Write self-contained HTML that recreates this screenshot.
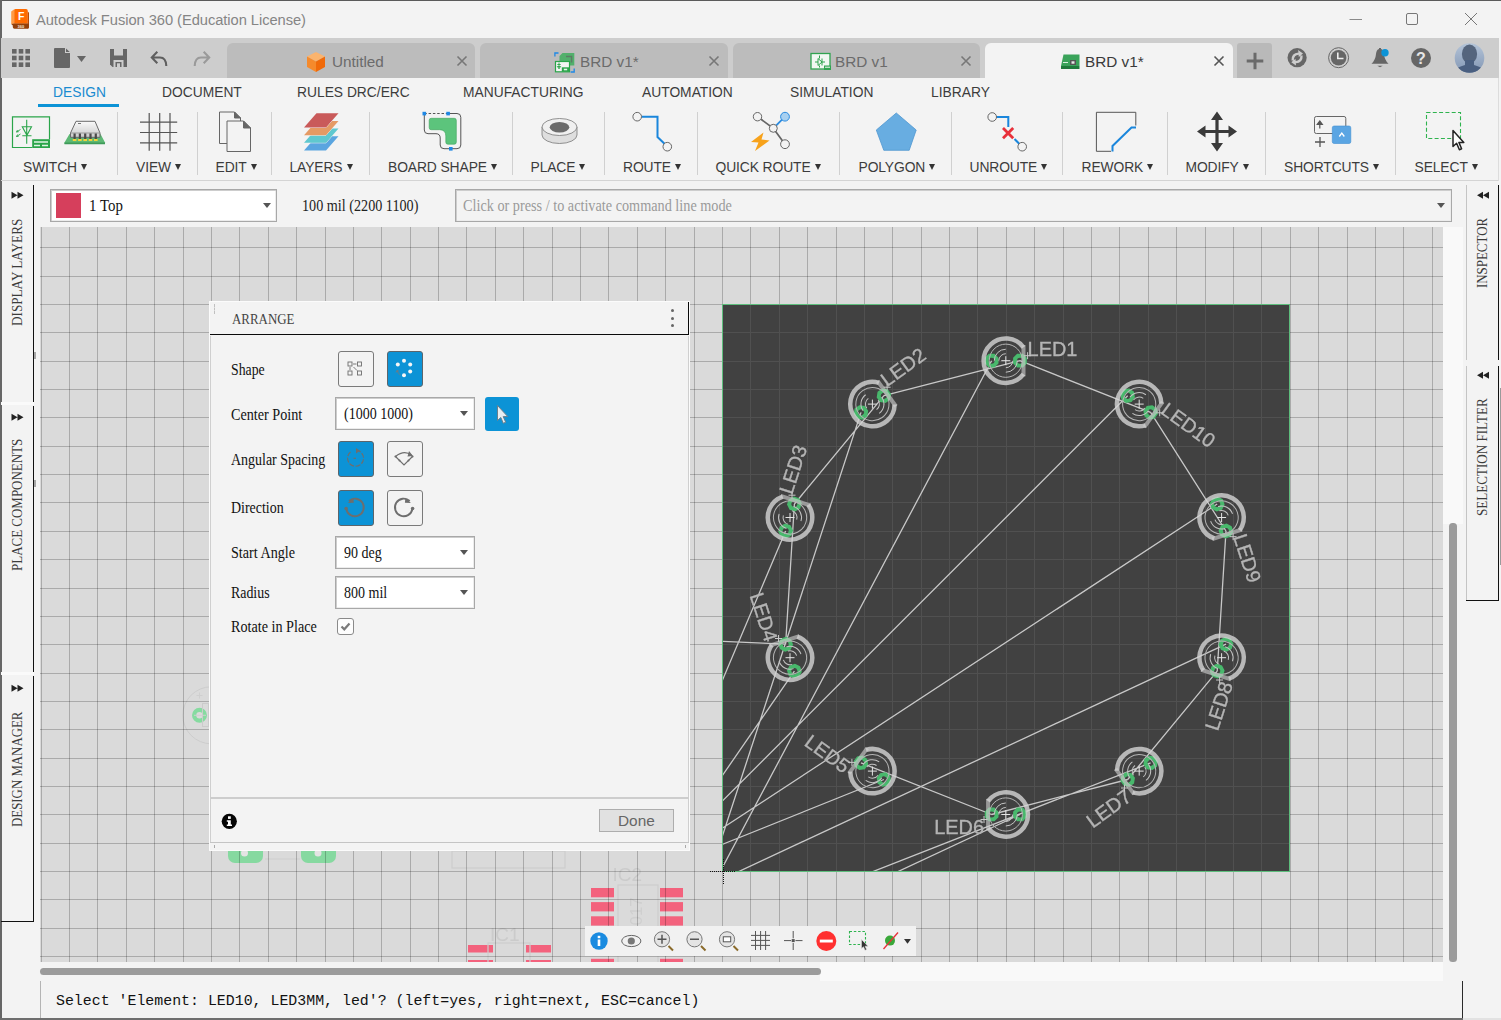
<!DOCTYPE html>
<html><head><meta charset="utf-8"><title>Autodesk Fusion 360 (Education License)</title>
<style>
*{box-sizing:border-box;margin:0;padding:0}
html,body{width:1501px;height:1020px;overflow:hidden;background:#f3f3f3;font-family:"Liberation Sans",sans-serif;}
.a{position:absolute}
.t{position:absolute;white-space:nowrap;line-height:1}
.serif{font-family:"Liberation Serif","Noto Serif CJK SC",serif}
#win{position:absolute;left:0;top:0;width:1501px;height:1020px;background:#f3f3f3;overflow:hidden}
.sep{position:absolute;width:1px;background:#d0d0d0;top:112px;height:63px}
.lbl{position:absolute;white-space:nowrap;line-height:1;font-size:13.85px;color:#3c3c3c;top:161px;letter-spacing:-0.1px}
.lbl i{display:inline-block;width:0;height:0;border-left:3.5px solid transparent;border-right:3.5px solid transparent;border-top:6px solid #333;margin-left:4px;vertical-align:1.8px}
.rt{position:absolute;white-space:nowrap;line-height:1;font-size:13.82px;color:#3c3c3c;top:86px}
.tab{position:absolute;top:43px;height:35px;border-radius:6px 6px 0 0;background:#bcbcbc}
.tabt{position:absolute;white-space:nowrap;line-height:1;font-size:15.3px;color:#6b6b6b;top:54px}
.vt{position:absolute;white-space:nowrap;line-height:1;font-size:12.5px;color:#3c3c3c;transform-origin:0 0;transform:rotate(-90deg)}
.dl{position:absolute;white-space:nowrap;line-height:1;font-size:14px;color:#1a1a1a;left:231px}
.btn{position:absolute;width:36px;height:36px;border-radius:3px;border:1px solid #7a7a7a;background:#f3f3f3}
.btn.on{background:#0c93d6;border-color:#5c656b}
.cmb{position:absolute;background:#fff;border:1px solid #a8a8a8;box-shadow:inset 1px 1px 0 #cdcdcd, inset -1px -1px 0 #ececec}
</style></head><body><div id="win">
<div class="a" style="left:0;top:0;width:1501px;height:1px;background:#5a5a5a"></div>
<div class="a" style="left:0;top:0;width:1.500px;height:1020px;background:#666"></div>
<svg class="a" style="left:10px;top:8px" width="20" height="22" viewBox="10 8 20 22">
<path d="M11.200 11.500 L14.300 9.300 V23.800 L11.200 24Z" fill="#ff9a45"/>
<path d="M15.500 9.100 H26 Q27.800 9.100 27.800 11 V23.800 H14.200 V10.400 Q14.200 9.100 15.500 9.100Z" fill="#ff6b00"/>
<path d="M27.800 11.500 L29 12.800 V27 Q29 28.700 27.400 28.700 L27.800 23.800Z" fill="#b84a06"/>
<path d="M11.200 24 L14.200 23.600 H27.900 L29 24 V27 Q29 28.700 27.400 28.700 H14.500 Q12.800 28.700 12.800 27 V25.500Z" fill="#94400a"/>
<text x="21.200" y="20.300" font-family="Liberation Sans,sans-serif" font-weight="bold" font-size="10.500" fill="#fff" text-anchor="middle">F</text>
<text x="20.800" y="27.600" font-family="Liberation Sans,sans-serif" font-weight="bold" font-size="4" fill="#f6e6da" text-anchor="middle">360</text>
</svg>
<div class="t" style="left:36px;top:12.8px;font-size:14.7px;letter-spacing:-0.05px;color:#858585">Autodesk Fusion 360 (Education License)</div>
<svg class="a" style="left:1340px;top:8px" width="150" height="24" viewBox="0 0 150 24">
<path d="M9.5 11.5 H22" stroke="#8a8a8a" stroke-width="1" fill="none"/>
<rect x="66.5" y="5.5" width="11" height="11" rx="1.5" stroke="#777" stroke-width="1" fill="none"/>
<path d="M125 5 L137 17 M137 5 L125 17" stroke="#777" stroke-width="1" fill="none"/>
</svg>
<div class="a" style="left:1px;top:38px;width:1498px;height:40px;background:#cdcdcd"></div>
<svg class="a" style="left:0;top:38px" width="228" height="40" viewBox="0 38 228 40">
<g fill="#666">
<rect x="12" y="49" width="4.6" height="4.6"/><rect x="18.7" y="49" width="4.6" height="4.6"/><rect x="25.4" y="49" width="4.6" height="4.6"/>
<rect x="12" y="55.7" width="4.6" height="4.6"/><rect x="18.7" y="55.7" width="4.6" height="4.6"/><rect x="25.4" y="55.7" width="4.6" height="4.6"/>
<rect x="12" y="62.4" width="4.6" height="4.6"/><rect x="18.7" y="62.4" width="4.6" height="4.6"/><rect x="25.4" y="62.4" width="4.6" height="4.6"/>
<path d="M55 48 H65 V53 H70 V67 Q70 68 69 68 H55 Q54 68 54 67 V49 Q54 48 55 48Z M66 48.5 L69.8 52 H66Z"/>
<path d="M77 56 H86 L81.5 62Z"/>
<path d="M110 49 H127 V67 H112.5 L110 64.5Z"/>
<path d="M157.300 51.800 L151.800 57.500 L157.300 63.200 M152.500 57.500 H160 Q166 57.500 166.300 66" fill="none" stroke="#5f5f5f" stroke-width="2.100"/>
<path d="M203.700 51.800 L209.200 57.500 L203.700 63.200 M208.500 57.500 H201 Q195 57.500 194.700 66" fill="none" stroke="#9a9a9a" stroke-width="2.100"/>
</g>
<g fill="#cdcdcd"><rect x="114" y="49" width="9" height="6.5"/><rect x="113.5" y="60" width="10" height="7"/></g>
<rect x="115.5" y="62" width="6" height="5" fill="#666"/><rect x="117" y="63.3" width="3" height="3.7" fill="#cdcdcd"/>
</svg>
<div class="tab" style="left:227px;width:248px;background:#bcbcbc"></div>
<div class="tab" style="left:480px;width:247.5px;background:#bcbcbc"></div>
<div class="tab" style="left:733px;width:246.5px;background:#bcbcbc"></div>
<div class="tab" style="left:985px;width:247.5px;background:#f3f3f3"></div>
<svg class="a" style="left:306px;top:51px" width="20" height="22" viewBox="0 0 20 22">
<path d="M10 1 L19 5.5 L10 10.5 L1 5.500Z" fill="#fbb46e"/><path d="M1 5.500 L10 10.500 V21 L1 16Z" fill="#f58a2c"/><path d="M19 5.500 L10 10.500 V21 L19 16Z" fill="#f06a0a"/></svg>
<div class="tabt" style="left:332px">Untitled</div>
<div class="tabt" style="left:580px">BRD v1*</div>
<div class="tabt" style="left:835px">BRD v1</div>
<div class="tabt" style="left:1085px;color:#3a3a3a">BRD v1*</div>
<svg class="a" style="left:455.5px;top:55px" width="12" height="12" viewBox="0 0 12 12"><path d="M1.500 1.500 L10.500 10.500 M10.500 1.500 L1.500 10.500" stroke="#777" stroke-width="1.600" fill="none"/></svg>
<svg class="a" style="left:708px;top:55px" width="12" height="12" viewBox="0 0 12 12"><path d="M1.500 1.500 L10.500 10.500 M10.500 1.500 L1.500 10.500" stroke="#777" stroke-width="1.600" fill="none"/></svg>
<svg class="a" style="left:960px;top:55px" width="12" height="12" viewBox="0 0 12 12"><path d="M1.500 1.500 L10.500 10.500 M10.500 1.500 L1.500 10.500" stroke="#777" stroke-width="1.600" fill="none"/></svg>
<svg class="a" style="left:1212.5px;top:55px" width="12" height="12" viewBox="0 0 12 12"><path d="M1.500 1.500 L10.500 10.500 M10.500 1.500 L1.500 10.500" stroke="#555" stroke-width="1.600" fill="none"/></svg>
<svg class="a" style="left:553px;top:51px" width="24" height="22" viewBox="553 51 24 22">
<path d="M562.500 53 H574.300 V65.600 H559.500 V56Z" fill="#52b06c"/>
<path d="M566 55.800 H572.300 V62.500 H570.800 V57.300 H566Z" fill="#5d7a66"/>
<rect x="555.500" y="61.500" width="14" height="10.300" fill="#f4f4f4" stroke="#2aa54a" stroke-width="1.200"/>
<path d="M559 62.500 v6.500 M557.300 64.500 h3.400 M557.300 66.500 h3.400 l-1.700 2z" stroke="#2aa54a" stroke-width="0.900" fill="none"/>
<rect x="561.800" y="67.300" width="7.400" height="4.400" fill="#2aa54a"/><rect x="563.800" y="68.700" width="3.400" height="1.600" fill="#e8f5ec"/>
<path d="M554.900 56.500 V53 H558.500" stroke="#1e88e5" stroke-width="1.300" fill="none"/>
<path d="M574.200 68.500 V72 H570.600" stroke="#1e88e5" stroke-width="1.300" fill="none"/>
</svg>
<svg class="a" style="left:810px;top:52px" width="22" height="20" viewBox="0 0 22 20">
<rect x="1" y="1.500" width="19" height="15.500" fill="#f1f8f2" stroke="#2fa34f" stroke-width="1.300"/>
<path d="M5 10 h3 M8 6.500 v7 l4 -3.500z M12 6.500 v7 M12 10 h3 M9.500 3.500 v3 M9.500 13.500 v2" stroke="#2fa34f" stroke-width="1" fill="none"/>
<rect x="14" y="13.500" width="7" height="4.500" fill="#2fa34f"/><rect x="15" y="14.700" width="5" height="1" fill="#f1f8f2"/>
</svg>
<svg class="a" style="left:1059px;top:53px" width="22" height="18" viewBox="0 0 22 18">
<path d="M4.500 1.500 H20.500 V13 H2 Z" fill="#3aa35a"/><path d="M2 13 H20.500 V16 H2Z" fill="#1f7a3c"/>
<rect x="11" y="7" width="6" height="5" fill="#555"/><rect x="12.500" y="8.300" width="3" height="2.400" fill="#e8e8e8"/>
<path d="M4 9.500 h5" stroke="#d9f0df" stroke-width="1"/>
</svg>
<div class="a" style="left:1237px;top:43px;width:35px;height:35px;background:#b9b9b9;border-radius:3px 3px 0 0"></div>
<svg class="a" style="left:1245px;top:51px" width="20" height="20" viewBox="0 0 20 20"><path d="M10 1.700 V18.300 M1.700 10 H18.300" stroke="#6a6a6a" stroke-width="3"/></svg>
<svg class="a" style="left:1280px;top:40px" width="215" height="38" viewBox="1280 40 215 38">
<circle cx="1297.100" cy="57.700" r="9.600" fill="#666"/>
<path d="M1291.500 60.500 Q1291 53 1298.500 52.500 L1298 50 L1303 53.500 L1298.800 57 L1298.600 54.800 Q1294 55 1293.800 60.500Z M1302.700 55.500 Q1303 63 1295.800 63.300 L1296 65.600 L1291.300 62.200 L1295.500 58.800 L1295.700 61 Q1300.300 60.800 1300.400 55.500Z" fill="#cdcdcd"/>
<circle cx="1338.600" cy="57.700" r="10" fill="none" stroke="#666" stroke-width="1"/>
<circle cx="1338.600" cy="57.700" r="7.800" fill="#666"/>
<path d="M1337.800 52.500 V58.500 H1343.500" stroke="#ededed" stroke-width="1.600" fill="none"/>
<path d="M1371.500 63.800 Q1375.500 60 1376 54 Q1376.500 49.500 1379 49 V48 H1381 V49 Q1383.500 49.500 1384 54 Q1384.500 60 1388.500 63.800Z" fill="#666"/>
<path d="M1377.300 65.800 H1382.700 L1380 67.300Z" fill="#666"/>
<circle cx="1385" cy="52.800" r="3.700" fill="#0c93d6"/>
<circle cx="1421" cy="58" r="10" fill="#666"/>
<text x="1421" y="64" font-family="Liberation Sans,sans-serif" font-weight="bold" font-size="16" fill="#e6e6e6" text-anchor="middle">?</text>
<defs><linearGradient id="avg" x1="0" y1="0" x2="0" y2="1"><stop offset="0" stop-color="#b4c4d8"/><stop offset="1" stop-color="#8397b4"/></linearGradient><clipPath id="avc"><circle cx="1469.500" cy="58" r="14.800"/></clipPath></defs>
<circle cx="1469.500" cy="58" r="14.800" fill="url(#avg)"/>
<g clip-path="url(#avc)"><ellipse cx="1469.500" cy="54" rx="7.600" ry="9.500" fill="#55657d"/><path d="M1465 60 h9 v5 q8 2 11 6 v6 h-31 v-6 q3 -4 11 -6z" fill="#4a5f80"/></g>
</svg>
<div class="rt" style="left:53px;color:#1a8bd0">DESIGN</div>
<div class="rt" style="left:162px">DOCUMENT</div>
<div class="rt" style="left:297px">RULES DRC/ERC</div>
<div class="rt" style="left:463px">MANUFACTURING</div>
<div class="rt" style="left:642px">AUTOMATION</div>
<div class="rt" style="left:790px">SIMULATION</div>
<div class="rt" style="left:931px">LIBRARY</div>
<div class="a" style="left:38px;top:104px;width:81px;height:3px;background:#0c93d6"></div>
<div class="sep" style="left:117px"></div>
<div class="sep" style="left:197px"></div>
<div class="sep" style="left:271px"></div>
<div class="sep" style="left:369px"></div>
<div class="sep" style="left:512px"></div>
<div class="sep" style="left:604px"></div>
<div class="sep" style="left:697px"></div>
<div class="sep" style="left:839px"></div>
<div class="sep" style="left:951px"></div>
<div class="sep" style="left:1062px"></div>
<div class="sep" style="left:1167px"></div>
<div class="sep" style="left:1265px"></div>
<div class="sep" style="left:1395px"></div>
<div class="lbl" style="left:23px">SWITCH<i></i></div>
<div class="lbl" style="left:136px">VIEW<i></i></div>
<div class="lbl" style="left:215.5px">EDIT<i></i></div>
<div class="lbl" style="left:289.5px">LAYERS<i></i></div>
<div class="lbl" style="left:388px">BOARD SHAPE<i></i></div>
<div class="lbl" style="left:530.5px">PLACE<i></i></div>
<div class="lbl" style="left:623px">ROUTE<i></i></div>
<div class="lbl" style="left:715.5px">QUICK ROUTE<i></i></div>
<div class="lbl" style="left:858.5px">POLYGON<i></i></div>
<div class="lbl" style="left:969.5px">UNROUTE<i></i></div>
<div class="lbl" style="left:1081.5px">REWORK<i></i></div>
<div class="lbl" style="left:1185.5px">MODIFY<i></i></div>
<div class="lbl" style="left:1284px">SHORTCUTS<i></i></div>
<div class="lbl" style="left:1414.5px">SELECT<i></i></div>
<div class="a" style="left:1px;top:180px;width:1498px;height:1px;background:#d4d4d4"></div><div class="a" style="left:1498px;top:78px;width:1px;height:103px;background:#dcdcdc"></div>
<svg class="a" style="left:0;top:108px" width="1501" height="50" viewBox="0 108 1501 50">
<g stroke="#2aa54a" fill="none" stroke-width="1.200">
<path d="M32 147.500 H12.500 V116.800 H49.500 V139"/>
<path d="M26.700 119.700 V143.700 M22.300 126.700 H31.500 L26.900 135.300Z M22.300 135.800 H31.500" stroke-width="1.100"/>
<path d="M20.500 129.500 L16.500 132 M20.500 134 L16.500 136.500 M16.500 132 l2.200 -0.300 M16.500 132 l1 -2 M16.500 136.500 l2.200 -0.300 M16.500 136.500 l1 -2" stroke-width="0.900"/>
</g>
<rect x="32.200" y="139.200" width="17.800" height="8.800" fill="#2aa54a"/>
<path d="M34 142 H48 M34 145.500 H40 M42 145.500 H48" stroke="#dff3e4" stroke-width="1.300"/>
<path d="M69.500 134 H100.500 L105 142.500 V144 H64.500 V142.500Z" fill="#5cb874"/>
<path d="M64.500 142.500 H105 V144.200 H64.500Z" fill="#3e9a58"/>
<defs><linearGradient id="chipg" x1="0" y1="0" x2="0" y2="1"><stop offset="0" stop-color="#fafafa"/><stop offset="1" stop-color="#c9c9c9"/></linearGradient></defs>
<path d="M76 121.300 H95 L100 133 V137.300 H70.500 V133Z" fill="url(#chipg)" stroke="#6a6a6a" stroke-width="1"/>
<path d="M70.500 133 H100" stroke="#8a8a8a" stroke-width="0.800"/>
<g fill="#4a4a4a"><rect x="73.500" y="133.500" width="2.200" height="5.500"/><rect x="78.800" y="133.500" width="2.200" height="5.500"/><rect x="84.100" y="133.500" width="2.200" height="5.500"/><rect x="89.400" y="133.500" width="2.200" height="5.500"/><rect x="94.700" y="133.500" width="2.200" height="5.500"/></g>
<g fill="#f0d23a"><rect x="72.800" y="139" width="3.600" height="2"/><rect x="78.100" y="139" width="3.600" height="2"/><rect x="83.400" y="139" width="3.600" height="2"/><rect x="88.700" y="139" width="3.600" height="2"/><rect x="94" y="139" width="3.600" height="2"/></g>
<path d="M78 123.500 h3" stroke="#555" stroke-width="0.800"/>
<path d="M149.200 113 V150.800 M159.700 113 V150.800 M170 113 V150.800 M140 122.200 H177.200 M140 132.500 H177.200 M140 142.800 H177.200" stroke="#555" stroke-width="1.200" fill="none"/>
<g stroke="#666" stroke-width="1" fill="#f3f3f3">
<path d="M219.500 112 H234.500 L240.500 118 V143.500 H219.500Z"/>
<path d="M234.500 112 V118 H240.500Z" fill="#666"/>
<path d="M227 121 H243.500 L250.500 128 V151.500 H227Z"/>
<path d="M243.500 121 V128 H250.500Z" fill="#666"/>
</g>
<path d="M316.500 136.3 H338.500 L326 150.5 H304Z" fill="#5aa5e0" stroke="#f3f3f3" stroke-width="1" paint-order="stroke"/>
<path d="M316.500 128.6 H338.500 L326 142.79999999999998 H304Z" fill="#5fc8cf" stroke="#f3f3f3" stroke-width="1" paint-order="stroke"/>
<path d="M316.500 121 H338.500 L326 135.2 H304Z" fill="#e59a64" stroke="#f3f3f3" stroke-width="1" paint-order="stroke"/>
<path d="M316.500 113.3 H338.500 L326 127.5 H304Z" fill="#c95a5a" stroke="#f3f3f3" stroke-width="1" paint-order="stroke"/>
<path d="M448 113.500 H457 Q460.800 113.500 460.800 117.300 V145 Q460.800 148.700 457 148.700 H444 Q440.200 148.700 440.200 145 V138 Q440.200 133.700 436 133.700 H428 Q424.300 133.700 424.300 130 V113.500" fill="none" stroke="#555" stroke-width="1"/>
<path d="M424.300 113.500 H448" stroke="#555" stroke-width="1" stroke-dasharray="2.500 1.800" fill="none"/>
<path d="M431.200 118.300 H454.300 Q456.300 118.300 456.300 120.300 V142.200 Q456.300 144.200 454.300 144.200 H447.800 Q445.800 144.200 445.800 142.200 V136 Q445.800 129.700 439.500 129.700 H431.200 Q429.200 129.700 429.200 127.700 V120.300 Q429.200 118.300 431.200 118.300Z" fill="#5cc47c" stroke="#3da35b" stroke-width="0.600"/>
<g fill="#1e88e5"><rect x="422.500" y="111.800" width="3.600" height="3.600"/><rect x="446.300" y="111.800" width="3.600" height="3.600"/><rect x="449" y="147" width="3.600" height="3.600"/></g>
<path d="M542 127 V135 A17.500 8.500 0 0 0 577 135 V127Z" fill="#dedede" stroke="#777" stroke-width="0.800"/>
<ellipse cx="559.500" cy="127" rx="17.500" ry="8.500" fill="#f0f0f0" stroke="#777" stroke-width="0.800"/>
<ellipse cx="559.500" cy="127.300" rx="9.800" ry="5.300" fill="#6b6b6b"/>
<path d="M641.500 116.700 H657.500 V137 L664.500 143.800" fill="none" stroke="#1a86dc" stroke-width="2"/>
<circle cx="637.200" cy="116.700" r="4.300" fill="#f3f3f3" stroke="#666" stroke-width="1"/><circle cx="667.300" cy="146.700" r="4.300" fill="#f3f3f3" stroke="#666" stroke-width="1"/>
<path d="M757.500 116.700 L773.300 128.300 L785 144.200" stroke="#666" stroke-width="1.800" fill="none"/>
<path d="M773.300 128.300 L785 116.700" stroke="#2a8be0" stroke-width="1.800" fill="none"/>
<circle cx="757.500" cy="116.700" r="4.200" fill="#f3f3f3" stroke="#666" stroke-width="1"/>
<circle cx="785" cy="116.700" r="4.400" fill="#a8d0f0" stroke="#2a8be0" stroke-width="1"/>
<circle cx="773.300" cy="128.300" r="4" fill="#f3f3f3" stroke="#666" stroke-width="1"/>
<circle cx="785" cy="144.200" r="4.400" fill="#f3f3f3" stroke="#666" stroke-width="1"/>
<path d="M763.500 132.500 L751 142 L758.500 142.500 L755 151 L769.500 140.500 L761.500 139.500Z" fill="#f7a21b"/>
<path d="M896.300 113 L916.200 130 L909.200 150.300 H883.800 L876.300 130Z" fill="#68ade1" stroke="#4f97d0" stroke-width="0.800"/>
<path d="M996.500 117 H1008.300 V127" fill="none" stroke="#1a86dc" stroke-width="2"/>
<path d="M1014.500 139 L1019.500 144" fill="none" stroke="#1a86dc" stroke-width="2"/>
<path d="M1003 128 L1013.200 138.200 M1013.200 128 L1003 138.200" stroke="#e8303a" stroke-width="2.800"/>
<circle cx="992.200" cy="117" r="4.300" fill="#f3f3f3" stroke="#666" stroke-width="1"/><circle cx="1022.200" cy="146.700" r="4.300" fill="#f3f3f3" stroke="#666" stroke-width="1"/>
<path d="M1135.800 125.500 V112.300 H1096.400 V151.300 H1111" fill="none" stroke="#555" stroke-width="1"/>
<path d="M1136 127.500 H1131.500 L1112.500 146 V151.500" fill="none" stroke="#1a86dc" stroke-width="2"/>
<g fill="#3a3a3a"><path d="M1217 111.500 L1223 120 H1218.600 V129.900 H1228.500 V125.500 L1237 131.500 L1228.500 137.500 V133.100 H1218.600 V143 H1223 L1217 151.500 L1211 143 H1215.400 V133.100 H1205.500 V137.500 L1197 131.500 L1205.500 125.500 V129.900 H1215.400 V120 H1211Z"/></g>
<rect x="1314.500" y="116.500" width="31.300" height="17" rx="1.800" fill="none" stroke="#666" stroke-width="1"/>
<path d="M1319.800 128.500 V123 M1317.300 124.300 L1319.800 121 L1322.300 124.300Z" stroke="#555" stroke-width="1.200" fill="#555"/>
<rect x="1332.300" y="126" width="18.500" height="17.500" rx="1.800" fill="#5aa5e3" stroke="#3f8fd2" stroke-width="0.600"/>
<path d="M1339.300 136.500 L1341.800 133 L1344.300 136.500" stroke="#fff" stroke-width="1.300" fill="none"/>
<path d="M1320 137 V147 M1315 142 H1325" stroke="#555" stroke-width="1.300"/>
<rect x="1426.500" y="112.500" width="34" height="26" fill="none" stroke="#2eb34e" stroke-width="1.100" stroke-dasharray="4 2.300"/>
<path d="M1453 130.500 V146.500 L1456.600 143.200 L1459.400 149.800 L1461.600 148.800 L1458.900 142.400 H1463.800Z" fill="#fdfdfd" stroke="#222" stroke-width="1.500" stroke-linejoin="round"/>
</svg>
<div class="cmb" style="left:50px;top:189px;width:227px;height:33px"></div>
<div class="a" style="left:56px;top:193px;width:25px;height:25px;background:#d63f5c"></div>
<div class="t serif" style="left:89px;top:198px;font-size:16px;color:#111;transform-origin:0 0;transform:scaleX(0.93)">1 Top</div>
<div class="a" style="left:262.600px;top:203.300px;width:0;height:0;border-left:4.200px solid transparent;border-right:4.200px solid transparent;border-top:5.600px solid #555"></div>
<div class="t serif" style="left:301.5px;top:198px;font-size:16px;color:#222;transform-origin:0 0;transform:scaleX(0.886)">100 mil (2200 1100)</div>
<div class="cmb" style="left:455px;top:189px;width:997px;height:33px;background:#f3f3f3"></div>
<div class="t serif" style="left:462.5px;top:198px;font-size:16px;color:#9a9a9a;transform-origin:0 0;transform:scaleX(0.89)">Click or press / to activate command line mode</div>
<div class="a" style="left:1436.800px;top:203.300px;width:0;height:0;border-left:4.200px solid transparent;border-right:4.200px solid transparent;border-top:5.600px solid #555"></div>
<div class="a" style="left:33px;top:185px;width:1.400px;height:217px;background:#111"></div>
<div class="a" style="left:33px;top:406px;width:1.400px;height:266px;background:#111"></div>
<div class="a" style="left:33px;top:676px;width:1.400px;height:246px;background:#111"></div>
<div class="a" style="left:1px;top:921px;width:33px;height:1.400px;background:#111"></div>
<div class="a" style="left:1px;top:402px;width:33px;height:3px;background:#fafafa"></div>
<div class="a" style="left:1px;top:672px;width:33px;height:3px;background:#fafafa"></div>
<div class="a" style="left:34.400px;top:352px;width:1.600px;height:7px;background:#a6a6a6"></div><div class="a" style="left:34.400px;top:480px;width:1.600px;height:7px;background:#a6a6a6"></div>
<svg class="a" style="left:11px;top:191px" width="14" height="9" viewBox="0 0 14 9"><path d="M0.500 0.800 L6.500 4.300 L0.500 7.800Z M6.500 0.800 L12.500 4.300 L6.500 7.800Z" fill="#222"/></svg>
<svg class="a" style="left:11px;top:413px" width="14" height="9" viewBox="0 0 14 9"><path d="M0.500 0.800 L6.500 4.300 L0.500 7.800Z M6.500 0.800 L12.500 4.300 L6.500 7.800Z" fill="#222"/></svg>
<svg class="a" style="left:11px;top:684px" width="14" height="9" viewBox="0 0 14 9"><path d="M0.500 0.800 L6.500 4.300 L0.500 7.800Z M6.500 0.800 L12.500 4.300 L6.500 7.800Z" fill="#222"/></svg>
<div class="vt serif" style="left:9px;top:326px;font-size:15.5px;transform:rotate(-90deg) scaleX(0.85)">DISPLAY LAYERS</div>
<div class="vt serif" style="left:9px;top:571px;font-size:15.5px;transform:rotate(-90deg) scaleX(0.837)">PLACE COMPONENTS</div>
<div class="vt serif" style="left:9px;top:827px;font-size:15.5px;transform:rotate(-90deg) scaleX(0.83)">DESIGN MANAGER</div>
<div class="a" style="left:1498px;top:185px;width:1.400px;height:175px;background:#111"></div>
<div class="a" style="left:1498px;top:366px;width:1.400px;height:235px;background:#111"></div>
<div class="a" style="left:1466px;top:185px;width:1px;height:175px;background:#c4c4c4"></div>
<div class="a" style="left:1466px;top:366px;width:1px;height:235px;background:#c4c4c4"></div>
<div class="a" style="left:1466px;top:600px;width:33px;height:1.400px;background:#111"></div>
<div class="a" style="left:1499.600px;top:388px;width:1.400px;height:177px;background:#9a9a9a"></div>
<svg class="a" style="left:1475.5px;top:191px" width="14" height="9" viewBox="0 0 14 9"><path d="M13 0.800 L7 4.300 L13 7.800Z M7 0.800 L1 4.300 L7 7.800Z" fill="#222"/></svg>
<svg class="a" style="left:1475.5px;top:371px" width="14" height="9" viewBox="0 0 14 9"><path d="M13 0.800 L7 4.300 L13 7.800Z M7 0.800 L1 4.300 L7 7.800Z" fill="#222"/></svg>
<div class="vt serif" style="left:1474px;top:288px;font-size:15.5px;transform:rotate(-90deg) scaleX(0.833)">INSPECTOR</div>
<div class="vt serif" style="left:1474px;top:516px;font-size:15.5px;transform:rotate(-90deg) scaleX(0.844)">SELECTION FILTER</div>
<div class="a" style="left:1443px;top:227px;width:20px;height:297px;background:#f9f9f9"></div>
<div class="a" style="left:1449.300px;top:523px;width:7.500px;height:439px;background:#9b9b9b;border-radius:3.500px"></div>
<div class="a" style="left:820px;top:962px;width:623px;height:19px;background:#f9f9f9"></div>
<div class="a" style="left:40px;top:968px;width:781px;height:7px;background:#9b9b9b;border-radius:3.500px"></div>
<div class="a" style="left:40px;top:981px;width:1423px;height:37px;border-left:1px solid #b4b4b4;border-right:1px solid #2a2a2a;background:#f3f3f3"></div>
<div class="t" style="left:56px;top:993.5px;font-family:'Liberation Mono',monospace;font-size:14.900px;color:#111">Select 'Element: LED10, LED3MM, led'? (left=yes, right=next, ESC=cancel)</div>
<div class="a" style="left:0;top:1017.500px;width:1463px;height:2.500px;background:#6e6e6e"></div><div class="a" style="left:1463px;top:1018px;width:38px;height:2px;background:#e2e2e2"></div>
<svg class="a" style="left:40px;top:227px;will-change:transform" width="1403" height="735" viewBox="40 227 1403 735">
<rect x="40" y="227" width="1403" height="735" fill="#dadada"/>
<rect x="591" y="888.0" width="23" height="9.300" fill="#f3627d"/>
<rect x="660" y="888.0" width="23" height="9.300" fill="#f3627d"/>
<rect x="591" y="902.1" width="23" height="9.300" fill="#f3627d"/>
<rect x="660" y="902.1" width="23" height="9.300" fill="#f3627d"/>
<rect x="591" y="916.3" width="23" height="9.300" fill="#f3627d"/>
<rect x="660" y="916.3" width="23" height="9.300" fill="#f3627d"/>
<rect x="591" y="930.5" width="23" height="9.300" fill="#f3627d"/>
<rect x="660" y="930.5" width="23" height="9.300" fill="#f3627d"/>
<rect x="591" y="944.6" width="23" height="9.300" fill="#f3627d"/>
<rect x="660" y="944.6" width="23" height="9.300" fill="#f3627d"/>
<rect x="591" y="958.8" width="23" height="9.300" fill="#f3627d"/>
<rect x="660" y="958.8" width="23" height="9.300" fill="#f3627d"/>
<rect x="468" y="945" width="25" height="7.500" fill="#f3627d"/>
<rect x="526" y="945" width="25" height="7.500" fill="#f3627d"/>
<rect x="468" y="960" width="25" height="7.500" fill="#f3627d"/>
<rect x="526" y="960" width="25" height="7.500" fill="#f3627d"/>
<g fill="none" stroke="#cdcdcd" stroke-width="1.200"><rect x="618" y="885" width="40" height="80"/><rect x="488" y="943" width="42" height="22"/><rect x="452" y="851" width="113" height="17"/><path d="M265 859 H300"/></g>
<g font-family="Liberation Sans,sans-serif" fill="#cbcbcb" font-size="19"><text x="612.500" y="880.500">IC2</text><text x="490" y="941">IC1</text></g>
<text transform="translate(642 935) rotate(-90)" font-family="Liberation Sans,sans-serif" fill="#cfcfcf" font-size="17">4017</text>
<rect x="228" y="839" width="35" height="24" rx="7" fill="#86d9a0"/><rect x="301" y="839" width="35" height="24" rx="7" fill="#86d9a0"/>
<circle cx="244.500" cy="853" r="3.500" fill="#e4e4e4"/><circle cx="318" cy="853" r="3.500" fill="#e4e4e4"/>
<circle cx="211.300" cy="715.300" r="28.500" fill="none" stroke="#cdcdcd" stroke-width="1"/><circle cx="199.500" cy="715.300" r="5.350" fill="none" stroke="#86dba0" stroke-width="4.300"/>
<rect x="202.500" y="703.500" width="6" height="23" fill="none" stroke="#cbcbcb" stroke-width="1"/><path d="M196.500 695.500 h6 M199.500 692.500 v6 M194 715.300 h12" stroke="#cfcfcf" stroke-width="1" fill="none"/>
<path d="M41.5 227 V962M69.5 227 V962M97.5 227 V962M126.5 227 V962M154.5 227 V962M183.5 227 V962M211.5 227 V962M239.5 227 V962M268.5 227 V962M296.5 227 V962M325.5 227 V962M353.5 227 V962M381.5 227 V962M410.5 227 V962M438.5 227 V962M466.5 227 V962M495.5 227 V962M523.5 227 V962M552.5 227 V962M580.5 227 V962M608.5 227 V962M637.5 227 V962M665.5 227 V962M694.5 227 V962M722.5 227 V962M750.5 227 V962M779.5 227 V962M807.5 227 V962M836.5 227 V962M864.5 227 V962M892.5 227 V962M921.5 227 V962M949.5 227 V962M977.5 227 V962M1006.5 227 V962M1034.5 227 V962M1063.5 227 V962M1091.5 227 V962M1119.5 227 V962M1148.5 227 V962M1176.5 227 V962M1205.5 227 V962M1233.5 227 V962M1261.5 227 V962M1290.5 227 V962M1318.5 227 V962M1347.5 227 V962M1375.5 227 V962M1403.5 227 V962M1432.5 227 V962" stroke="#000" stroke-opacity="0.22" stroke-width="1" fill="none" shape-rendering="crispEdges"/>
<path d="M40 247.5 H1443M40 276.5 H1443M40 304.5 H1443M40 332.5 H1443M40 361.5 H1443M40 389.5 H1443M40 417.5 H1443M40 446.5 H1443M40 474.5 H1443M40 502.5 H1443M40 531.5 H1443M40 559.5 H1443M40 588.5 H1443M40 616.5 H1443M40 644.5 H1443M40 673.5 H1443M40 701.5 H1443M40 729.5 H1443M40 758.5 H1443M40 786.5 H1443M40 814.5 H1443M40 843.5 H1443M40 871.5 H1443M40 899.5 H1443M40 928.5 H1443M40 956.5 H1443" stroke="#000" stroke-opacity="0.22" stroke-width="1" fill="none" shape-rendering="crispEdges"/>
<rect x="722" y="304" width="568" height="568" fill="#5dbd7c"/>
<rect x="723" y="305" width="566" height="566" fill="#414141"/>
<path d="M750.5 305 V871M779.5 305 V871M807.5 305 V871M836.5 305 V871M864.5 305 V871M892.5 305 V871M921.5 305 V871M949.5 305 V871M977.5 305 V871M1006.5 305 V871M1034.5 305 V871M1063.5 305 V871M1091.5 305 V871M1119.5 305 V871M1148.5 305 V871M1176.5 305 V871M1205.5 305 V871M1233.5 305 V871M1261.5 305 V871M723 332.5 H1289M723 361.5 H1289M723 389.5 H1289M723 417.5 H1289M723 446.5 H1289M723 474.5 H1289M723 502.5 H1289M723 531.5 H1289M723 559.5 H1289M723 588.5 H1289M723 616.5 H1289M723 644.5 H1289M723 673.5 H1289M723 701.5 H1289M723 729.5 H1289M723 758.5 H1289M723 786.5 H1289M723 814.5 H1289M723 843.5 H1289" stroke="#505050" stroke-width="1" fill="none" shape-rendering="crispEdges"/>
<clipPath id="bclip"><rect x="723" y="305" width="566" height="566"/></clipPath>
<g clip-path="url(#bclip)">
<path d="M1127.7 395.7 L602.5 920.9M1217.2 504.0 L602.5 906.8M1226.0 644.2 L602.5 935.1M1150.6 762.8 L602.5 977.5M1020.0 814.5 L671.5 977.5M883.9 779.5 L602.5 892.6M794.4 671.2 L602.5 949.2M785.6 531.0 L602.5 963.4M861.0 412.4 L671.5 991.6M991.6 360.7 L671.5 963.4M1150.6 412.4 L1020.0 360.7M1020.0 360.7 L883.9 395.7M883.9 395.7 L794.4 504.0M794.4 504.0 L785.6 644.2M861.0 762.8 L991.6 814.5M991.6 814.5 L1127.7 779.5M1127.7 779.5 L1217.2 671.2M1217.2 671.2 L1226.0 531.0M1226.0 531.0 L1150.6 412.4M785.6 644.2 L-214.4 598.2" stroke="#c8c8c8" stroke-width="1.300" fill="none"/>
<g transform="translate(1005.80 360.72) rotate(0)">
<path d="M-7.30 2.85 L-11.33 6.88 L-17.03 6.88 L-21.06 2.85 L-21.06 -2.85 L-17.03 -6.88 L-11.33 -6.88 L-7.30 -2.85Z M-11.18 0 A3 3 0 1 0 -17.18 0 A3 3 0 1 0 -11.18 0Z M21.06 2.85 L17.03 6.88 L11.33 6.88 L7.30 2.85 L7.30 -2.85 L11.33 -6.88 L17.03 -6.88 L21.06 -2.85Z M17.18 0 A3 3 0 1 0 11.18 0 A3 3 0 1 0 17.18 0Z" fill="#48b86c" fill-rule="evenodd"/>
<path d="M17.7 -13.40 A22.2 22.2 0 1 0 17.7 13.40" fill="none" stroke="#d4d4d4" stroke-opacity="0.8" stroke-width="4.500"/>
<path d="M17.7 -15.60 V15.60" fill="none" stroke="#cfcfcf" stroke-opacity="0.62" stroke-width="4"/>
<g fill="none" stroke="#c4c4c4" stroke-width="1"><circle cx="0" cy="0" r="16.600" stroke="#b4b4b4"/><path d="M-11.500 0 A11.500 11.500 0 0 1 0 -11.500 M11.500 0 A11.500 11.500 0 0 1 0 11.500"/><path d="M-7 0 A7 7 0 0 1 0 -7 M7 0 A7 7 0 0 1 0 7"/></g>
</g>
<path d="M1001.3 360.7 h9 M1005.8 356.2 v9" stroke="#e4e4e4" stroke-width="1" fill="none"/>
<g transform="translate(872.44 404.05) rotate(-36)">
<path d="M-7.30 2.85 L-11.33 6.88 L-17.03 6.88 L-21.06 2.85 L-21.06 -2.85 L-17.03 -6.88 L-11.33 -6.88 L-7.30 -2.85Z M-11.18 0 A3 3 0 1 0 -17.18 0 A3 3 0 1 0 -11.18 0Z M21.06 2.85 L17.03 6.88 L11.33 6.88 L7.30 2.85 L7.30 -2.85 L11.33 -6.88 L17.03 -6.88 L21.06 -2.85Z M17.18 0 A3 3 0 1 0 11.18 0 A3 3 0 1 0 17.18 0Z" fill="#48b86c" fill-rule="evenodd"/>
<path d="M17.7 -13.40 A22.2 22.2 0 1 0 17.7 13.40" fill="none" stroke="#d4d4d4" stroke-opacity="0.8" stroke-width="4.500"/>
<path d="M17.7 -15.60 V15.60" fill="none" stroke="#cfcfcf" stroke-opacity="0.62" stroke-width="4"/>
<g fill="none" stroke="#c4c4c4" stroke-width="1"><circle cx="0" cy="0" r="16.600" stroke="#b4b4b4"/><path d="M-11.500 0 A11.500 11.500 0 0 1 0 -11.500 M11.500 0 A11.500 11.500 0 0 1 0 11.500"/><path d="M-7 0 A7 7 0 0 1 0 -7 M7 0 A7 7 0 0 1 0 7"/></g>
</g>
<path d="M867.9 404.1 h9 M872.4 399.6 v9" stroke="#e4e4e4" stroke-width="1" fill="none"/>
<g transform="translate(790.02 517.49) rotate(-72)">
<path d="M-7.30 2.85 L-11.33 6.88 L-17.03 6.88 L-21.06 2.85 L-21.06 -2.85 L-17.03 -6.88 L-11.33 -6.88 L-7.30 -2.85Z M-11.18 0 A3 3 0 1 0 -17.18 0 A3 3 0 1 0 -11.18 0Z M21.06 2.85 L17.03 6.88 L11.33 6.88 L7.30 2.85 L7.30 -2.85 L11.33 -6.88 L17.03 -6.88 L21.06 -2.85Z M17.18 0 A3 3 0 1 0 11.18 0 A3 3 0 1 0 17.18 0Z" fill="#48b86c" fill-rule="evenodd"/>
<path d="M17.7 -13.40 A22.2 22.2 0 1 0 17.7 13.40" fill="none" stroke="#d4d4d4" stroke-opacity="0.8" stroke-width="4.500"/>
<path d="M17.7 -15.60 V15.60" fill="none" stroke="#cfcfcf" stroke-opacity="0.62" stroke-width="4"/>
<g fill="none" stroke="#c4c4c4" stroke-width="1"><circle cx="0" cy="0" r="16.600" stroke="#b4b4b4"/><path d="M-11.500 0 A11.500 11.500 0 0 1 0 -11.500 M11.500 0 A11.500 11.500 0 0 1 0 11.500"/><path d="M-7 0 A7 7 0 0 1 0 -7 M7 0 A7 7 0 0 1 0 7"/></g>
</g>
<path d="M785.5 517.5 h9 M790.0 513.0 v9" stroke="#e4e4e4" stroke-width="1" fill="none"/>
<g transform="translate(790.02 657.71) rotate(-108)">
<path d="M-7.30 2.85 L-11.33 6.88 L-17.03 6.88 L-21.06 2.85 L-21.06 -2.85 L-17.03 -6.88 L-11.33 -6.88 L-7.30 -2.85Z M-11.18 0 A3 3 0 1 0 -17.18 0 A3 3 0 1 0 -11.18 0Z M21.06 2.85 L17.03 6.88 L11.33 6.88 L7.30 2.85 L7.30 -2.85 L11.33 -6.88 L17.03 -6.88 L21.06 -2.85Z M17.18 0 A3 3 0 1 0 11.18 0 A3 3 0 1 0 17.18 0Z" fill="#48b86c" fill-rule="evenodd"/>
<path d="M17.7 -13.40 A22.2 22.2 0 1 0 17.7 13.40" fill="none" stroke="#d4d4d4" stroke-opacity="0.8" stroke-width="4.500"/>
<path d="M17.7 -15.60 V15.60" fill="none" stroke="#cfcfcf" stroke-opacity="0.62" stroke-width="4"/>
<g fill="none" stroke="#c4c4c4" stroke-width="1"><circle cx="0" cy="0" r="16.600" stroke="#b4b4b4"/><path d="M-11.500 0 A11.500 11.500 0 0 1 0 -11.500 M11.500 0 A11.500 11.500 0 0 1 0 11.500"/><path d="M-7 0 A7 7 0 0 1 0 -7 M7 0 A7 7 0 0 1 0 7"/></g>
</g>
<path d="M785.5 657.7 h9 M790.0 653.2 v9" stroke="#e4e4e4" stroke-width="1" fill="none"/>
<g transform="translate(872.44 771.15) rotate(-144)">
<path d="M-7.30 2.85 L-11.33 6.88 L-17.03 6.88 L-21.06 2.85 L-21.06 -2.85 L-17.03 -6.88 L-11.33 -6.88 L-7.30 -2.85Z M-11.18 0 A3 3 0 1 0 -17.18 0 A3 3 0 1 0 -11.18 0Z M21.06 2.85 L17.03 6.88 L11.33 6.88 L7.30 2.85 L7.30 -2.85 L11.33 -6.88 L17.03 -6.88 L21.06 -2.85Z M17.18 0 A3 3 0 1 0 11.18 0 A3 3 0 1 0 17.18 0Z" fill="#48b86c" fill-rule="evenodd"/>
<path d="M17.7 -13.40 A22.2 22.2 0 1 0 17.7 13.40" fill="none" stroke="#d4d4d4" stroke-opacity="0.8" stroke-width="4.500"/>
<path d="M17.7 -15.60 V15.60" fill="none" stroke="#cfcfcf" stroke-opacity="0.62" stroke-width="4"/>
<g fill="none" stroke="#c4c4c4" stroke-width="1"><circle cx="0" cy="0" r="16.600" stroke="#b4b4b4"/><path d="M-11.500 0 A11.500 11.500 0 0 1 0 -11.500 M11.500 0 A11.500 11.500 0 0 1 0 11.500"/><path d="M-7 0 A7 7 0 0 1 0 -7 M7 0 A7 7 0 0 1 0 7"/></g>
</g>
<path d="M867.9 771.1 h9 M872.4 766.6 v9" stroke="#e4e4e4" stroke-width="1" fill="none"/>
<g transform="translate(1005.80 814.48) rotate(-180)">
<path d="M-7.30 2.85 L-11.33 6.88 L-17.03 6.88 L-21.06 2.85 L-21.06 -2.85 L-17.03 -6.88 L-11.33 -6.88 L-7.30 -2.85Z M-11.18 0 A3 3 0 1 0 -17.18 0 A3 3 0 1 0 -11.18 0Z M21.06 2.85 L17.03 6.88 L11.33 6.88 L7.30 2.85 L7.30 -2.85 L11.33 -6.88 L17.03 -6.88 L21.06 -2.85Z M17.18 0 A3 3 0 1 0 11.18 0 A3 3 0 1 0 17.18 0Z" fill="#48b86c" fill-rule="evenodd"/>
<path d="M17.7 -13.40 A22.2 22.2 0 1 0 17.7 13.40" fill="none" stroke="#d4d4d4" stroke-opacity="0.8" stroke-width="4.500"/>
<path d="M17.7 -15.60 V15.60" fill="none" stroke="#cfcfcf" stroke-opacity="0.62" stroke-width="4"/>
<g fill="none" stroke="#c4c4c4" stroke-width="1"><circle cx="0" cy="0" r="16.600" stroke="#b4b4b4"/><path d="M-11.500 0 A11.500 11.500 0 0 1 0 -11.500 M11.500 0 A11.500 11.500 0 0 1 0 11.500"/><path d="M-7 0 A7 7 0 0 1 0 -7 M7 0 A7 7 0 0 1 0 7"/></g>
</g>
<path d="M1001.3 814.5 h9 M1005.8 810.0 v9" stroke="#e4e4e4" stroke-width="1" fill="none"/>
<g transform="translate(1139.16 771.15) rotate(-216)">
<path d="M-7.30 2.85 L-11.33 6.88 L-17.03 6.88 L-21.06 2.85 L-21.06 -2.85 L-17.03 -6.88 L-11.33 -6.88 L-7.30 -2.85Z M-11.18 0 A3 3 0 1 0 -17.18 0 A3 3 0 1 0 -11.18 0Z M21.06 2.85 L17.03 6.88 L11.33 6.88 L7.30 2.85 L7.30 -2.85 L11.33 -6.88 L17.03 -6.88 L21.06 -2.85Z M17.18 0 A3 3 0 1 0 11.18 0 A3 3 0 1 0 17.18 0Z" fill="#48b86c" fill-rule="evenodd"/>
<path d="M17.7 -13.40 A22.2 22.2 0 1 0 17.7 13.40" fill="none" stroke="#d4d4d4" stroke-opacity="0.8" stroke-width="4.500"/>
<path d="M17.7 -15.60 V15.60" fill="none" stroke="#cfcfcf" stroke-opacity="0.62" stroke-width="4"/>
<g fill="none" stroke="#c4c4c4" stroke-width="1"><circle cx="0" cy="0" r="16.600" stroke="#b4b4b4"/><path d="M-11.500 0 A11.500 11.500 0 0 1 0 -11.500 M11.500 0 A11.500 11.500 0 0 1 0 11.500"/><path d="M-7 0 A7 7 0 0 1 0 -7 M7 0 A7 7 0 0 1 0 7"/></g>
</g>
<path d="M1134.7 771.1 h9 M1139.2 766.6 v9" stroke="#e4e4e4" stroke-width="1" fill="none"/>
<g transform="translate(1221.58 657.71) rotate(-252)">
<path d="M-7.30 2.85 L-11.33 6.88 L-17.03 6.88 L-21.06 2.85 L-21.06 -2.85 L-17.03 -6.88 L-11.33 -6.88 L-7.30 -2.85Z M-11.18 0 A3 3 0 1 0 -17.18 0 A3 3 0 1 0 -11.18 0Z M21.06 2.85 L17.03 6.88 L11.33 6.88 L7.30 2.85 L7.30 -2.85 L11.33 -6.88 L17.03 -6.88 L21.06 -2.85Z M17.18 0 A3 3 0 1 0 11.18 0 A3 3 0 1 0 17.18 0Z" fill="#48b86c" fill-rule="evenodd"/>
<path d="M17.7 -13.40 A22.2 22.2 0 1 0 17.7 13.40" fill="none" stroke="#d4d4d4" stroke-opacity="0.8" stroke-width="4.500"/>
<path d="M17.7 -15.60 V15.60" fill="none" stroke="#cfcfcf" stroke-opacity="0.62" stroke-width="4"/>
<g fill="none" stroke="#c4c4c4" stroke-width="1"><circle cx="0" cy="0" r="16.600" stroke="#b4b4b4"/><path d="M-11.500 0 A11.500 11.500 0 0 1 0 -11.500 M11.500 0 A11.500 11.500 0 0 1 0 11.500"/><path d="M-7 0 A7 7 0 0 1 0 -7 M7 0 A7 7 0 0 1 0 7"/></g>
</g>
<path d="M1217.1 657.7 h9 M1221.6 653.2 v9" stroke="#e4e4e4" stroke-width="1" fill="none"/>
<g transform="translate(1221.58 517.49) rotate(-288)">
<path d="M-7.30 2.85 L-11.33 6.88 L-17.03 6.88 L-21.06 2.85 L-21.06 -2.85 L-17.03 -6.88 L-11.33 -6.88 L-7.30 -2.85Z M-11.18 0 A3 3 0 1 0 -17.18 0 A3 3 0 1 0 -11.18 0Z M21.06 2.85 L17.03 6.88 L11.33 6.88 L7.30 2.85 L7.30 -2.85 L11.33 -6.88 L17.03 -6.88 L21.06 -2.85Z M17.18 0 A3 3 0 1 0 11.18 0 A3 3 0 1 0 17.18 0Z" fill="#48b86c" fill-rule="evenodd"/>
<path d="M17.7 -13.40 A22.2 22.2 0 1 0 17.7 13.40" fill="none" stroke="#d4d4d4" stroke-opacity="0.8" stroke-width="4.500"/>
<path d="M17.7 -15.60 V15.60" fill="none" stroke="#cfcfcf" stroke-opacity="0.62" stroke-width="4"/>
<g fill="none" stroke="#c4c4c4" stroke-width="1"><circle cx="0" cy="0" r="16.600" stroke="#b4b4b4"/><path d="M-11.500 0 A11.500 11.500 0 0 1 0 -11.500 M11.500 0 A11.500 11.500 0 0 1 0 11.500"/><path d="M-7 0 A7 7 0 0 1 0 -7 M7 0 A7 7 0 0 1 0 7"/></g>
</g>
<path d="M1217.1 517.5 h9 M1221.6 513.0 v9" stroke="#e4e4e4" stroke-width="1" fill="none"/>
<g transform="translate(1139.16 404.05) rotate(-324)">
<path d="M-7.30 2.85 L-11.33 6.88 L-17.03 6.88 L-21.06 2.85 L-21.06 -2.85 L-17.03 -6.88 L-11.33 -6.88 L-7.30 -2.85Z M-11.18 0 A3 3 0 1 0 -17.18 0 A3 3 0 1 0 -11.18 0Z M21.06 2.85 L17.03 6.88 L11.33 6.88 L7.30 2.85 L7.30 -2.85 L11.33 -6.88 L17.03 -6.88 L21.06 -2.85Z M17.18 0 A3 3 0 1 0 11.18 0 A3 3 0 1 0 17.18 0Z" fill="#48b86c" fill-rule="evenodd"/>
<path d="M17.7 -13.40 A22.2 22.2 0 1 0 17.7 13.40" fill="none" stroke="#d4d4d4" stroke-opacity="0.8" stroke-width="4.500"/>
<path d="M17.7 -15.60 V15.60" fill="none" stroke="#cfcfcf" stroke-opacity="0.62" stroke-width="4"/>
<g fill="none" stroke="#c4c4c4" stroke-width="1"><circle cx="0" cy="0" r="16.600" stroke="#b4b4b4"/><path d="M-11.500 0 A11.500 11.500 0 0 1 0 -11.500 M11.500 0 A11.500 11.500 0 0 1 0 11.500"/><path d="M-7 0 A7 7 0 0 1 0 -7 M7 0 A7 7 0 0 1 0 7"/></g>
</g>
<path d="M1134.7 404.1 h9 M1139.2 399.6 v9" stroke="#e4e4e4" stroke-width="1" fill="none"/>
<text transform="translate(1027.6 355.7) rotate(0)" x="0" y="0" text-anchor="start" font-family="Liberation Sans,sans-serif" font-size="19.900" fill="#b4b4b4" stroke="#b4b4b4" stroke-width="0.350">LED1</text>
<path d="M1024.1 355.7 h7 M1027.6 352.2 v7" stroke="#c8c8c8" stroke-width="1" fill="none"/>
<text transform="translate(887.1 387.2) rotate(-36)" x="0" y="0" text-anchor="start" font-family="Liberation Sans,sans-serif" font-size="19.900" fill="#b4b4b4" stroke="#b4b4b4" stroke-width="0.350">LED2</text>
<path d="M883.6 387.2 h7 M887.1 383.7 v7" stroke="#c8c8c8" stroke-width="1" fill="none"/>
<text transform="translate(792.0 495.2) rotate(-72)" x="0" y="0" text-anchor="start" font-family="Liberation Sans,sans-serif" font-size="19.900" fill="#b4b4b4" stroke="#b4b4b4" stroke-width="0.350">LED3</text>
<path d="M788.5 495.2 h7 M792.0 491.7 v7" stroke="#c8c8c8" stroke-width="1" fill="none"/>
<text transform="translate(778.5 638.5) rotate(72)" x="0" y="14.3" text-anchor="end" font-family="Liberation Sans,sans-serif" font-size="19.900" fill="#b4b4b4" stroke="#b4b4b4" stroke-width="0.350">LED4</text>
<path d="M775.0 638.5 h7 M778.5 635.0 v7" stroke="#c8c8c8" stroke-width="1" fill="none"/>
<text transform="translate(851.9 762.4) rotate(36)" x="0" y="14.3" text-anchor="end" font-family="Liberation Sans,sans-serif" font-size="19.900" fill="#b4b4b4" stroke="#b4b4b4" stroke-width="0.350">LED5</text>
<path d="M848.4 762.4 h7 M851.9 758.9 v7" stroke="#c8c8c8" stroke-width="1" fill="none"/>
<text transform="translate(984.0 819.5) rotate(0)" x="0" y="14.3" text-anchor="end" font-family="Liberation Sans,sans-serif" font-size="19.900" fill="#b4b4b4" stroke="#b4b4b4" stroke-width="0.350">LED6</text>
<path d="M980.5 819.5 h7 M984.0 816.0 v7" stroke="#c8c8c8" stroke-width="1" fill="none"/>
<text transform="translate(1124.5 788.0) rotate(-36)" x="0" y="14.3" text-anchor="end" font-family="Liberation Sans,sans-serif" font-size="19.900" fill="#b4b4b4" stroke="#b4b4b4" stroke-width="0.350">LED7</text>
<path d="M1121.0 788.0 h7 M1124.5 784.5 v7" stroke="#c8c8c8" stroke-width="1" fill="none"/>
<text transform="translate(1219.6 680.0) rotate(-72)" x="0" y="14.3" text-anchor="end" font-family="Liberation Sans,sans-serif" font-size="19.900" fill="#b4b4b4" stroke="#b4b4b4" stroke-width="0.350">LED8</text>
<path d="M1216.1 680.0 h7 M1219.6 676.5 v7" stroke="#c8c8c8" stroke-width="1" fill="none"/>
<text transform="translate(1233.1 536.7) rotate(-288)" x="0" y="0" text-anchor="start" font-family="Liberation Sans,sans-serif" font-size="19.900" fill="#b4b4b4" stroke="#b4b4b4" stroke-width="0.350">LED9</text>
<path d="M1229.6 536.7 h7 M1233.1 533.2 v7" stroke="#c8c8c8" stroke-width="1" fill="none"/>
<text transform="translate(1159.7 412.8) rotate(-324)" x="0" y="0" text-anchor="start" font-family="Liberation Sans,sans-serif" font-size="19.900" fill="#b4b4b4" stroke="#b4b4b4" stroke-width="0.350">LED10</text>
<path d="M1156.2 412.8 h7 M1159.7 409.3 v7" stroke="#c8c8c8" stroke-width="1" fill="none"/>
</g>
<path d="M710 871.500 H735 M723.500 859 V884" stroke="#111" stroke-width="1" stroke-dasharray="1 1" fill="none" shape-rendering="crispEdges"/>
</svg>
<div class="a" style="left:585px;top:926px;width:331px;height:30px;background:#f1f1f1"></div>
<svg class="a" style="left:585px;top:926px" width="331" height="30" viewBox="585 926 331 30">
<circle cx="599" cy="941" r="8.700" fill="#1a8be0"/><rect x="597.700" y="935.800" width="2.600" height="2.400" fill="#fff"/><rect x="597.700" y="939.500" width="2.600" height="6.500" fill="#fff"/>
<ellipse cx="631.300" cy="941" rx="9.600" ry="5.600" fill="#f1f1f1" stroke="#666" stroke-width="1"/><circle cx="631.300" cy="941" r="3.600" fill="#777"/>
<g stroke="#8a6a2a" stroke-width="2"><path d="M668.500 946 L673 950.500"/><path d="M701 946 L705.500 950.500"/><path d="M733.500 946 L738 950.500"/></g>
<g fill="#e4e4e4" stroke="#777" stroke-width="1"><circle cx="662" cy="939.300" r="7.600"/><circle cx="694.500" cy="939.300" r="7.600"/><circle cx="727" cy="939.300" r="7.600"/></g>
<path d="M657.500 939.300 h9 M662 934.800 v9 M690 939.300 h9" stroke="#555" stroke-width="1.500" fill="none"/>
<rect x="723.300" y="936.800" width="7.400" height="5" fill="#fff" stroke="#555" stroke-width="1"/>
<path d="M755.500 931 V950 M760.600 931 V950 M765.600 931 V950 M751 935.400 H770 M751 940.400 H770 M751 945.400 H770" stroke="#555" stroke-width="1" fill="none"/>
<path d="M784 940.600 H791 M795.500 940.600 H802.500 M793.200 931 V938.300 M793.200 943 V950" stroke="#555" stroke-width="1" fill="none"/><rect x="791.700" y="939.100" width="3" height="3" fill="#555"/>
<circle cx="826.300" cy="941" r="10" fill="#ff3030"/><rect x="819.800" y="939.600" width="13" height="2.900" fill="#fff"/>
<rect x="849.500" y="931.500" width="16" height="13" fill="none" stroke="#2eb34e" stroke-width="1.100" stroke-dasharray="2.500 1.800"/>
<path d="M861.500 939.500 V948.500 L863.500 946.800 L865 950.300 L866.600 949.600 L865.100 946.200 H868Z" fill="#333" stroke="#ddd" stroke-width="0.600"/>
<circle cx="890" cy="940.600" r="5" fill="#3aa83a"/><path d="M883.500 949 L898 932.500" stroke="#e8303a" stroke-width="1.300"/>
<path d="M904 939 H911 L907.500 943.800Z" fill="#333"/>
</svg>
<div class="a" style="left:209px;top:301px;width:481px;height:550px;background:#f3f3f3;border:1px solid #fbfbfb"></div>
<div class="a" style="left:210px;top:334px;width:479px;height:1.400px;background:#0a0a0a"></div>
<div class="a" style="left:688px;top:302px;width:1.400px;height:33px;background:#0a0a0a"></div>
<div class="a" style="left:688px;top:336px;width:1px;height:507px;background:#cfcfcf"></div>
<div class="a" style="left:210px;top:336px;width:1px;height:507px;background:#cfcfcf"></div>
<div class="a" style="left:210px;top:797px;width:479px;height:2px;background:#cdcdcd"></div>
<div class="a" style="left:210px;top:842px;width:479px;height:1px;background:#c4c4c4"></div>
<div class="a" style="left:214px;top:304px;width:0;height:10px;border-left:1px dashed #c0c0c0"></div>
<div class="a" style="left:214px;top:845px;width:1px;height:3px;background:#aaa"></div><div class="a" style="left:685px;top:845px;width:1px;height:3px;background:#aaa"></div>
<div class="t serif" style="left:232px;top:312px;font-size:14.6px;color:#444;transform-origin:0 0;transform:scaleX(0.885);">ARRANGE</div>
<div class="a" style="left:670.500px;top:309.0px;width:3px;height:3px;border-radius:50%;background:#666"></div>
<div class="a" style="left:670.500px;top:316.5px;width:3px;height:3px;border-radius:50%;background:#666"></div>
<div class="a" style="left:670.500px;top:324.0px;width:3px;height:3px;border-radius:50%;background:#666"></div>
<div class="t serif" style="left:231px;top:362.1px;font-size:16px;color:#111;transform-origin:0 0;transform:scaleX(0.86);">Shape</div>
<div class="t serif" style="left:231px;top:406.6px;font-size:16px;color:#111;transform-origin:0 0;transform:scaleX(0.886);">Center Point</div>
<div class="t serif" style="left:231px;top:451.6px;font-size:16px;color:#111;transform-origin:0 0;transform:scaleX(0.873);">Angular Spacing</div>
<div class="t serif" style="left:231px;top:499.6px;font-size:16px;color:#111;transform-origin:0 0;transform:scaleX(0.872);">Direction</div>
<div class="t serif" style="left:231px;top:544.6px;font-size:16px;color:#111;transform-origin:0 0;transform:scaleX(0.883);">Start Angle</div>
<div class="t serif" style="left:231px;top:585.1px;font-size:16px;color:#111;transform-origin:0 0;transform:scaleX(0.868);">Radius</div>
<div class="t serif" style="left:231px;top:618.8px;font-size:16px;color:#111;transform-origin:0 0;transform:scaleX(0.886);">Rotate in Place</div>
<div class="btn" style="left:338px;top:351px"><svg class="a" style="left:-1px;top:-1px" width="36" height="36" viewBox="0.5 0.5 36 36"><g fill="none" stroke="#6e6e6e" stroke-width="0.900"><rect x="10.500" y="11.500" width="4" height="4"/><rect x="20" y="11.500" width="4" height="4"/><rect x="10.500" y="20.500" width="4" height="4"/><rect x="20" y="20.500" width="4" height="4"/><path d="M15.500 13.500 h3.500 M12.500 16.500 v3 M16 16.500 l3.500 3.500"/></g></svg></div>
<div class="btn on" style="left:387px;top:351px"><svg class="a" style="left:-1px;top:-1px" width="36" height="36" viewBox="0.5 0.5 36 36"><g fill="#f6f6f6"><circle cx="17.500" cy="10.300" r="2"/><circle cx="23.700" cy="14" r="2"/><circle cx="23.700" cy="21" r="2"/><circle cx="17.500" cy="24.800" r="2"/><circle cx="11.300" cy="14" r="2"/></g><path d="M10.500 20 Q11.500 23.500 14 24.500 M10.500 20 l-1 2 M10.500 20 l2 0.600" stroke="#6e7a82" stroke-width="0.900" fill="none"/></svg></div>
<div class="btn on" style="left:338px;top:441px"><svg class="a" style="left:-1px;top:-1px" width="36" height="36" viewBox="0.5 0.5 36 36"><g fill="none" stroke="#6e6e6e" stroke-width="1.200"><path d="M13 11.500 A8 8 0 1 0 21 10.300" stroke-dasharray="5 1.500"/><path d="M16 17.800 h2.500"/></g><path d="M18.500 7.500 L22.500 10.300 L18.500 13Z" fill="#6e6e6e"/></svg></div>
<div class="btn" style="left:387px;top:441px"><svg class="a" style="left:-1px;top:-1px" width="36" height="36" viewBox="0.5 0.5 36 36"><g fill="none" stroke="#6e6e6e" stroke-width="1.200"><path d="M9 16 L17.500 24.500 L26 16"/><path d="M9 16 Q17.500 9 25 14.500"/></g><path d="M22.500 10.500 L26.500 15.500 L21 16Z" fill="#6e6e6e"/><g fill="#6e6e6e"><circle cx="9" cy="16" r="1.100"/><circle cx="26" cy="16" r="1.100"/><circle cx="13" cy="20" r="1"/><circle cx="22" cy="20" r="1"/></g></svg></div>
<div class="btn on" style="left:338px;top:490px"><svg class="a" style="left:-1px;top:-1px" width="36" height="36" viewBox="0.5 0.5 36 36"><path d="M11.500 11.500 A8.800 8.800 0 1 1 8.800 19.500" fill="none" stroke="#6e6e6e" stroke-width="1.900"/><path d="M10.300 13.600 L15.800 8.300 L16.300 13.300Z" fill="#6e6e6e"/><circle cx="8.600" cy="19" r="1.800" fill="#6e6e6e"/></svg></div>
<div class="btn" style="left:387px;top:490px"><svg class="a" style="left:-1px;top:-1px" width="36" height="36" viewBox="0.5 0.5 36 36"><g transform="translate(-2.300 0)"><path d="M25.500 11.500 A8.800 8.800 0 1 0 28.200 19.500" fill="none" stroke="#6e6e6e" stroke-width="1.900"/><path d="M26.700 13.600 L21.200 8.300 L20.700 13.300Z" fill="#6e6e6e"/><circle cx="28.400" cy="19" r="1.800" fill="#6e6e6e"/></g></svg></div>
<div class="cmb" style="left:335px;top:397px;width:140px;height:33px"></div>
<div class="t serif" style="left:343.5px;top:406px;font-size:16px;color:#111;transform-origin:0 0;transform:scaleX(0.875);">(1000 1000)</div>
<div class="a" style="left:459.7px;top:411px;width:0;height:0;border-left:4.3px solid transparent;border-right:4.3px solid transparent;border-top:5.8px solid #555"></div>
<div class="cmb" style="left:335px;top:536px;width:140px;height:33px"></div>
<div class="t serif" style="left:343.5px;top:545px;font-size:16px;color:#111;transform-origin:0 0;transform:scaleX(0.875);">90 deg</div>
<div class="a" style="left:459.7px;top:550px;width:0;height:0;border-left:4.3px solid transparent;border-right:4.3px solid transparent;border-top:5.8px solid #555"></div>
<div class="cmb" style="left:335px;top:576px;width:140px;height:33px"></div>
<div class="t serif" style="left:343.5px;top:585px;font-size:16px;color:#111;transform-origin:0 0;transform:scaleX(0.875);">800 mil</div>
<div class="a" style="left:459.7px;top:590px;width:0;height:0;border-left:4.3px solid transparent;border-right:4.3px solid transparent;border-top:5.8px solid #555"></div>
<div class="a" style="left:485px;top:397px;width:34px;height:34px;background:#0c93d6;border-radius:3px"></div>
<svg class="a" style="left:485px;top:397px" width="34" height="34" viewBox="0 0 34 34"><path d="M12.500 8.500 V23.500 L15.800 20.500 L18.300 26.300 L20.700 25.200 L18.200 19.600 H22.800Z" fill="#e8eef2" stroke="#6b7f8c" stroke-width="1"/></svg>
<div class="a" style="left:337px;top:618px;width:17px;height:17px;background:#fdfdfd;border:1px solid #8a8a8a;border-radius:3px"></div>
<svg class="a" style="left:337px;top:618px" width="17" height="17" viewBox="0 0 17 17"><path d="M4.500 8.500 L7.300 11.300 L12.500 5.500" stroke="#7a7a7a" stroke-width="2.200" fill="none"/></svg>
<svg class="a" style="left:221px;top:813px" width="17" height="17" viewBox="0 0 17 17"><circle cx="8.300" cy="8.300" r="7.600" fill="#050505"/><rect x="7" y="3.300" width="2.800" height="2.600" fill="#fff"/><path d="M5.800 7.300 H9.800 V11.600 H11 V13 H5.800 V11.600 H7 V8.700 H5.800Z" fill="#fff"/></svg>
<div class="a" style="left:599px;top:809px;width:75px;height:23px;background:#e1e1e1;border:1px solid #adadad"></div>
<div class="t" style="left:618px;top:813px;font-size:15.400px;color:#666">Done</div>
</div></body></html>
